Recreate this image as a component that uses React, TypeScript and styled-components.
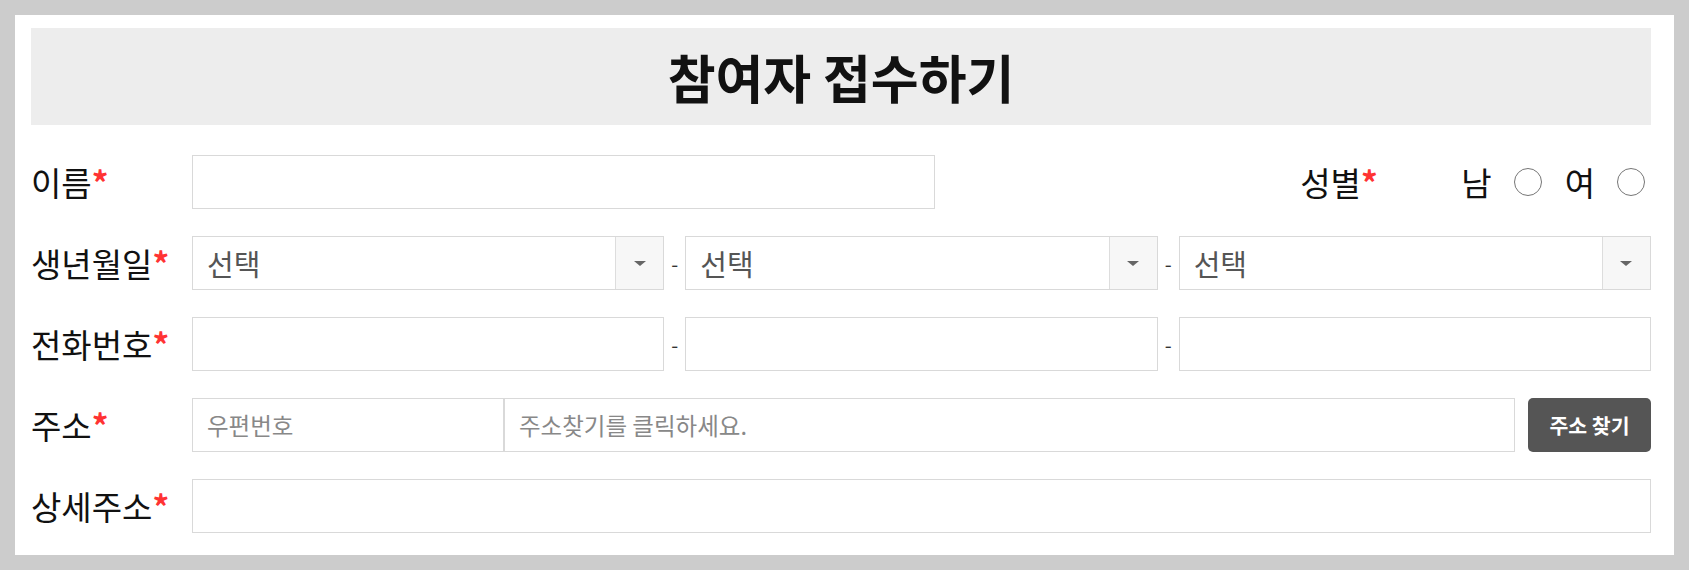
import React from "react";
import styled, { createGlobalStyle } from "styled-components";

const GlobalStyle = createGlobalStyle`
  * {
    box-sizing: border-box;
  }
  body {
    margin: 0;
    padding: 15px;
    background: #cccccc;
    font-family: "Noto Sans CJK KR", "Noto Sans", sans-serif;
  }
`;

const StyledPanel = styled.div`
  background: #fff;
  padding: 13px 23px 22px 16px;
`;

const StyledTitle = styled.h1`
  margin: 0;
  height: 97px;
  background: #ededed;
  display: flex;
  align-items: center;
  justify-content: center;
  font-size: 52px;
  font-weight: 700;
  color: #111;
`;

const StyledForm = styled.div`
  margin-top: 30px;
  display: flex;
  flex-direction: column;
  gap: 27px;
`;

const StyledRow = styled.div`
  display: flex;
  align-items: center;
  height: 54px;
`;

const StyledLabel = styled.label`
  width: 161px;
  flex-shrink: 0;
  font-size: 33px;
  font-weight: 400;
  color: #111;
  white-space: nowrap;
`;

const StyledStar = styled.span`
  color: #f33;
  font-weight: 700;
`;

const StyledInput = styled.input<{ $width?: number }>`
  flex: ${(p) => (p.$width ? `0 0 ${p.$width}px` : "1 1 0")};
  min-width: 0;
  height: 54px;
  border: 1px solid #d9d9d9;
  border-radius: 0;
  padding: 0 14px;
  font-size: 23.5px;
  font-family: inherit;
  color: #333;
  outline: none;

  &::placeholder {
    color: #888;
  }
`;

const StyledDash = styled.span`
  width: 21px;
  flex-shrink: 0;
  text-align: center;
  font-size: 20px;
  color: #333;
`;

const StyledSelectBox = styled.div`
  flex: 1 1 0;
  min-width: 0;
  height: 54px;
  display: flex;
  border: 1px solid #d9d9d9;
`;

const StyledSelect = styled.select`
  flex: 1;
  min-width: 0;
  appearance: none;
  border: 0;
  background: #fff;
  padding: 0 14px;
  font-size: 29px;
  font-family: inherit;
  color: #555;
  outline: none;
`;

const StyledArrow = styled.span`
  width: 48px;
  border-left: 1px solid #ddd;
  background: #f7f7f7;
  display: flex;
  align-items: center;
  justify-content: center;

  &::after {
    content: "";
    border-left: 6px solid transparent;
    border-right: 6px solid transparent;
    border-top: 5px solid #666;
  }
`;

const StyledGender = styled.div`
  margin-left: auto;
  display: flex;
  align-items: center;
`;

const StyledOption = styled.label<{ $first?: boolean }>`
  display: flex;
  align-items: center;
  gap: 22px;
  margin-left: ${(p) => (p.$first ? "0" : "17px")};
  font-size: 33px;
  font-weight: 400;
  color: #111;
`;

const StyledRadio = styled.input`
  appearance: none;
  width: 28px;
  height: 28px;
  margin: 0 6px 0 0;
  border: 1px solid #767676;
  border-radius: 50%;
  background: #fff;
`;

const StyledButton = styled.button`
  flex: 0 0 123px;
  height: 54px;
  margin-left: 13px;
  background: #555;
  color: #fff;
  border: 0;
  border-radius: 5px;
  font-size: 20.5px;
  font-weight: 700;
  font-family: inherit;
`;

const Label = ({ text }: { text: string }) => (
  <StyledLabel>
    {text}
    <StyledStar>*</StyledStar>
  </StyledLabel>
);

const SelectField = () => (
  <StyledSelectBox>
    <StyledSelect defaultValue="">
      <option value="">선택</option>
    </StyledSelect>
    <StyledArrow />
  </StyledSelectBox>
);

const App = () => {
  return (
    <>
      <GlobalStyle />
      <StyledPanel>
        <StyledTitle>참여자 접수하기</StyledTitle>
        <StyledForm>
          <StyledRow>
            <Label text="이름" />
            <StyledInput $width={743} />
            <StyledGender>
              <Label text="성별" />
              <StyledOption $first>
                남
                <StyledRadio type="radio" name="gender" />
              </StyledOption>
              <StyledOption>
                여
                <StyledRadio type="radio" name="gender" />
              </StyledOption>
            </StyledGender>
          </StyledRow>
          <StyledRow>
            <Label text="생년월일" />
            <SelectField />
            <StyledDash>-</StyledDash>
            <SelectField />
            <StyledDash>-</StyledDash>
            <SelectField />
          </StyledRow>
          <StyledRow>
            <Label text="전화번호" />
            <StyledInput />
            <StyledDash>-</StyledDash>
            <StyledInput />
            <StyledDash>-</StyledDash>
            <StyledInput />
          </StyledRow>
          <StyledRow>
            <Label text="주소" />
            <StyledInput $width={312} placeholder="우편번호" />
            <StyledInput placeholder="주소찾기를 클릭하세요." />
            <StyledButton>주소 찾기</StyledButton>
          </StyledRow>
          <StyledRow>
            <Label text="상세주소" />
            <StyledInput />
          </StyledRow>
        </StyledForm>
      </StyledPanel>
    </>
  );
};

export default App;
